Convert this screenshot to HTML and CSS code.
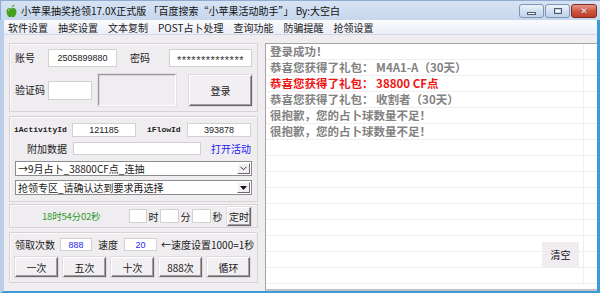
FILE: index.html
```html
<!DOCTYPE html>
<html lang="zh-CN">
<head>
    <meta charset="UTF-8">
    <meta name="viewport" content="width=device-width, initial-scale=1.0">
    <title>小苹果抽奖抢领17.0X正式版</title>
    <link rel="stylesheet" href="styles.css">
</head>
<body>
    <div class="ventana">
        <div class="titulo">
            <svg class="icono" width="11" height="14" viewBox="0 0 11 14">
                <path d="M5.6 3.6 C6 1.8 7.2 0.8 8.6 0.6 C8.4 2.2 7.2 3.4 5.6 3.6 Z" fill="#5aa830"/>
                <path d="M5.5 4.4 C4.2 3.6 1 3.4 0.6 7 C0.3 10 2.4 13.4 4 13.2 C4.8 13.1 5 12.8 5.5 12.8 C6 12.8 6.3 13.1 7 13.2 C8.6 13.4 10.6 10.2 10.5 7.2 C10.2 3.6 7 3.5 5.5 4.4 Z" fill="#46a11f"/>
                <path d="M2.2 6.2 C2.6 5 3.6 4.6 4.4 4.8 C3.4 5.4 2.9 6.4 2.8 7.6 Z" fill="#b8e38c"/>
            </svg>
            <span class="titulo-texto">小苹果抽奖抢领17.0X正式版 「百度搜索“小苹果活动助手”」 By:大空白</span>
            <div class="controles">
                <span class="ctl ctl-min"><i></i></span>
                <span class="ctl ctl-max"><i></i></span>
                <span class="ctl ctl-cerrar">✕</span>
            </div>
        </div>
        <div class="cuerpo">
            <div class="menu">
                <span>软件设置</span>
                <span>抽奖设置</span>
                <span>文本复制</span>
                <span>POST占卜处理</span>
                <span>查询功能</span>
                <span>防骗提醒</span>
                <span>抢领设置</span>
            </div>
            <div class="cliente">
                <div class="izquierda">
                    <div class="grupo grupo-login">
                        <div class="fila fila-cuenta">
                            <span class="etq etq-cuenta">账号</span>
                            <span class="campo campo-cuenta">2505899880</span>
                            <span class="etq etq-clave">密码</span>
                            <span class="campo campo-clave">**************</span>
                        </div>
                        <div class="fila fila-codigo">
                            <span class="etq etq-cuenta">验证码</span>
                            <span class="campo campo-codigo"></span>
                            <span class="captcha"></span>
                            <span class="boton boton-login">登录</span>
                        </div>
                    </div>

                    <div class="grupo grupo-actividad">
                        <div class="fila fila-ids">
                            <span class="etq-mono etq-act">iActivityId</span>
                            <span class="campo campo-id">121185</span>
                            <span class="etq-mono etq-flow">iFlowId</span>
                            <span class="campo campo-id">393878</span>
                        </div>
                        <div class="fila fila-extra">
                            <span class="etq etq-extra">附加数据</span>
                            <span class="campo campo-extra"></span>
                            <span class="enlace">打开活动</span>
                        </div>
                        <div class="combo combo-1">
                            <span class="combo-texto">→9月占卜_38800CF点_连抽</span>
                            <span class="combo-flecha">
                                <svg width="7" height="5" viewBox="0 0 7 5"><polyline points="0.5,0.8 3.5,3.8 6.5,0.8" fill="none" stroke="#333" stroke-width="1"/></svg>
                            </span>
                        </div>
                        <div class="combo combo-2">
                            <span class="combo-texto">抢领专区_请确认达到要求再选择</span>
                            <span class="combo-flecha">
                                <svg width="7" height="4" viewBox="0 0 7 4"><polygon points="0,0 7,0 3.5,4" fill="#111"/></svg>
                            </span>
                        </div>
                    </div>

                    <div class="grupo grupo-hora">
                        <span class="hora">18时54分02秒</span>
                        <span class="campo campo-t1"></span>
                        <span class="unidad">时</span>
                        <span class="campo campo-t2"></span>
                        <span class="unidad">分</span>
                        <span class="campo campo-t2"></span>
                        <span class="unidad">秒</span>
                        <span class="boton boton-timer">定时</span>
                    </div>

                    <div class="grupo grupo-veces">
                        <div class="fila fila-veces">
                            <span class="etq etq-veces">领取次数</span>
                            <span class="campo campo-num">888</span>
                            <span class="etq etq-vel">速度</span>
                            <span class="campo campo-num campo-vel">20</span>
                            <span class="nota">←速度设置1000=1秒</span>
                        </div>
                        <div class="fila fila-botones">
                            <span class="boton boton-vez">一次</span>
                            <span class="boton boton-vez">五次</span>
                            <span class="boton boton-vez">十次</span>
                            <span class="boton boton-vez">888次</span>
                            <span class="boton boton-vez">循环</span>
                        </div>
                    </div>
                </div>

                <div class="registro">
                    <div class="linea"><span class="col">登录成功！</span><span class="col2"></span></div>
                    <div class="linea"><span class="col">恭喜您获得了礼包： M4A1-A（30天）</span><span class="col2"></span></div>
                    <div class="linea rojo"><span class="col">恭喜您获得了礼包： 38800 CF点</span><span class="col2"></span></div>
                    <div class="linea"><span class="col">恭喜您获得了礼包： 收割者（30天）</span><span class="col2"></span></div>
                    <div class="linea"><span class="col">很抱歉，您的占卜球数量不足！</span><span class="col2"></span></div>
                    <div class="linea"><span class="col">很抱歉，您的占卜球数量不足！</span><span class="col2"></span></div>
                    <div class="linea"><span class="col"></span><span class="col2"></span></div>
                    <div class="linea"><span class="col"></span><span class="col2"></span></div>
                    <div class="linea"><span class="col"></span><span class="col2"></span></div>
                    <div class="linea"><span class="col"></span><span class="col2"></span></div>
                    <div class="linea"><span class="col"></span><span class="col2"></span></div>
                    <div class="linea"><span class="col"></span><span class="col2"></span></div>
                    <div class="linea"><span class="col"></span><span class="col2"></span></div>
                    <div class="linea"><span class="col"></span><span class="col2"></span></div>
                    <div class="linea"><span class="col"></span><span class="col2"></span></div>
                    <span class="limpiar">清空</span>
                </div>
            </div>
        </div>
    </div>
</body>
</html>
```

FILE: styles.css
```css
/* Ventana principal */
* {
    box-sizing: border-box;
}
body {
    margin: 0;
    width: 600px;
    height: 293px;
    overflow: hidden;
    font-family: "Noto Sans CJK SC", "Liberation Sans", sans-serif;
    font-size: 10px;
    color: #1a1a1a;
    background: #c8d9ee;
}
.ventana {
    width: 600px;
    height: 293px;
    display: flex;
    flex-direction: column;
    background: #c4d6ec;
}

/* Barra de titulo */
.titulo {
    height: 20px;
    display: flex;
    align-items: center;
    padding-left: 5px;
    background: linear-gradient(#d6e3f3, #c6d7ed);
    border-top: 1px solid #8eabd0;
    border-left: 1px solid #8eabd0;
}
.icono {
    margin-top: 1px;
}
.titulo-texto {
    margin-left: 4px;
    line-height: 14px;
    color: #111;
}
.controles {
    margin-left: auto;
    display: flex;
    align-self: flex-start;
    margin-top: 3px;
    margin-right: 3px;
}
.ctl {
    width: 25px;
    height: 14px;
    border: 1px solid #7c95b8;
    border-radius: 3px;
    background: linear-gradient(#eef3fa, #d3e0f0 50%, #c2d4ea);
    display: flex;
    align-items: center;
    justify-content: center;
    margin-left: 1px;
}
.ctl-min i {
    width: 9px;
    height: 3px;
    margin-top: 4px;
    background: #fff;
    border: 1px solid #4a5a70;
}
.ctl-max i {
    width: 8px;
    height: 6px;
    border: 1px solid #4a5a70;
    background: #fff;
    box-shadow: inset 0 0 0 1px #c8d6ea;
}
.ctl-cerrar {
    width: 26px;
    border-color: #7d2a20;
    background: linear-gradient(#e9988a, #cf5743 50%, #c13b27);
    color: #fff;
    font-family: "DejaVu Sans", sans-serif;
    font-weight: bold;
    font-size: 9px;
    line-height: 12px;
    text-shadow: 0 0 1px #5a1a10;
}

/* Marco y menu */
.cuerpo {
    flex: 1;
    display: flex;
    flex-direction: column;
    border-left: 4px solid #b9cfe9;
    border-right: 3px solid #3d9bda;
    border-bottom: 2px solid #3d9bda;
}
.menu {
    height: 15px;
    display: flex;
    align-items: center;
    padding-left: 4px;
    background: linear-gradient(#fbfbfe, #eaeef7);
    border-bottom: 1px solid #d2d9e6;
}
.menu span {
    margin-right: 10px;
    line-height: 13px;
}
.cliente {
    flex: 1;
    display: flex;
    background: #f0edf0;
}

/* Columna izquierda */
.izquierda {
    width: 261px;
    padding: 8px 0 0 5px;
}
.grupo {
    width: 249px;
    border: 1px solid #d6d2d6;
    box-shadow: inset 1px 1px #fbfafb;
    padding-left: 5px;
}
.grupo-login {
    height: 69px;
    padding-top: 5px;
}
.grupo-actividad {
    height: 86px;
    margin-top: 4px;
    padding-top: 5px;
}
.grupo-hora {
    height: 24px;
    margin-top: 2px;
    display: flex;
    align-items: center;
}
.grupo-veces {
    height: 51px;
    margin-top: 4px;
    padding-top: 5px;
}
.fila {
    display: flex;
    align-items: center;
}
.etq {
    line-height: 12px;
    white-space: nowrap;
}
.campo {
    display: flex;
    align-items: center;
    justify-content: center;
    background: #fff;
    border: 1px solid #d3d0d3;
    font-family: "Liberation Sans", sans-serif;
    font-size: 9px;
    color: #222;
}
.fila-cuenta {
    height: 18px;
}
.etq-cuenta {
    width: 33px;
}
.campo-cuenta {
    width: 69px;
    height: 18px;
}
.etq-clave {
    width: 39px;
    margin-left: 13px;
}
.campo-clave {
    width: 83px;
    height: 18px;
    font-size: 11px;
    letter-spacing: 0.5px;
    padding-top: 4px;
    color: #333;
}
.fila-codigo {
    height: 32px;
    margin-top: 7px;
}
.campo-codigo {
    width: 44px;
    height: 19px;
}
.captcha {
    width: 78px;
    height: 32px;
    margin-left: 6px;
    border-top: 1px solid #9a979a;
    border-left: 1px solid #9a979a;
    border-right: 1px solid #fff;
    border-bottom: 1px solid #fff;
    box-shadow: inset 1px 1px #dcd9dc, 0 0 0 1px #e2dfe2;
}
.boton {
    display: flex;
    align-items: center;
    justify-content: center;
    background: #f2eff2;
    border-top: 1px solid #fff;
    border-left: 1px solid #fff;
    border-right: 1px solid #696769;
    border-bottom: 1px solid #696769;
    box-shadow: inset -1px -1px #a19ea1, 0 0 0 1px #dedbde;
}
.boton-login {
    width: 63px;
    height: 31px;
    margin-left: 13px;
}

/* Grupo de actividad */
.fila-ids {
    height: 15px;
}
.etq-mono {
    font-family: "Liberation Mono", monospace;
    font-size: 8px;
    font-weight: bold;
    color: #222;
}
.etq-act {
    width: 58px;
    margin-left: -1px;
    padding-right: 1px;
}
.campo-id {
    width: 64px;
    height: 14px;
}
.etq-flow {
    width: 40px;
    margin-left: 11px;
}
.fila-extra {
    height: 15px;
    margin-top: 4px;
}
.etq-extra {
    width: 58px;
    text-align: right;
    padding-right: 6px;
}
.campo-extra {
    width: 128px;
    height: 13px;
}
.enlace {
    margin-left: 10px;
    color: #2323f5;
}
.combo {
    width: 237px;
    height: 15px;
    display: flex;
    align-items: center;
    background: #fff;
    border: 1px solid #8d8b8d;
    padding: 0 1px 0 2px;
}
.combo-1 {
    margin-top: 5px;
}
.combo-2 {
    margin-top: 4px;
}
.combo-texto {
    flex: 1;
    line-height: 12px;
}
.combo-flecha {
    width: 13px;
    height: 11px;
    display: flex;
    align-items: center;
    justify-content: center;
    background: #f2eff2;
    border-top: 1px solid #fff;
    border-left: 1px solid #fff;
    border-right: 1px solid #6d6b6d;
    border-bottom: 1px solid #6d6b6d;
}

/* Grupo de hora */
.hora {
    width: 114px;
    padding-left: 27px;
    color: #2f9a2f;
    font-size: 9.5px;
    letter-spacing: -0.2px;
}
.campo-t1 {
    width: 18px;
    height: 14px;
}
.campo-t2 {
    width: 19px;
    height: 14px;
}
.unidad {
    width: 13px;
    text-align: center;
}
.boton-timer {
    width: 24px;
    height: 19px;
    margin-left: 3px;
}

/* Grupo de veces */
.fila-veces {
    height: 13px;
}
.etq-veces {
    width: 45px;
}
.campo-num {
    width: 32px;
    height: 13px;
    color: #2727ef;
}
.etq-vel {
    width: 26px;
    margin-left: 6px;
}
.campo-vel {
    width: 33px;
}
.nota {
    margin-left: 4px;
    white-space: nowrap;
}
.fila-botones {
    height: 20px;
    margin-top: 6px;
    gap: 5px;
}
.boton-vez {
    width: 43px;
    height: 20px;
}

/* Registro de la derecha */
.registro {
    position: relative;
    flex: 1;
    margin-top: 8px;
    background: #fff;
    border-top: 1px solid #a5a3a5;
    border-left: 1px solid #a5a3a5;
    border-bottom: 2px solid #c3c1c3;
    overflow: hidden;
}
.linea {
    display: flex;
    height: 16px;
    border-bottom: 1px solid #efefef;
    font-size: 11.5px;
    font-weight: bold;
    color: #828282;
    line-height: 15px;
    white-space: nowrap;
}
.linea .col {
    width: 318px;
    padding-left: 4px;
    border-right: 1px solid #efefef;
}
.rojo {
    color: #ee1515;
}
.limpiar {
    position: absolute;
    left: 276px;
    top: 198px;
    width: 37px;
    height: 25px;
    display: flex;
    align-items: center;
    justify-content: center;
    background: #f0ecf0;
    font-size: 10px;
    font-weight: normal;
    color: #111;
}
```
